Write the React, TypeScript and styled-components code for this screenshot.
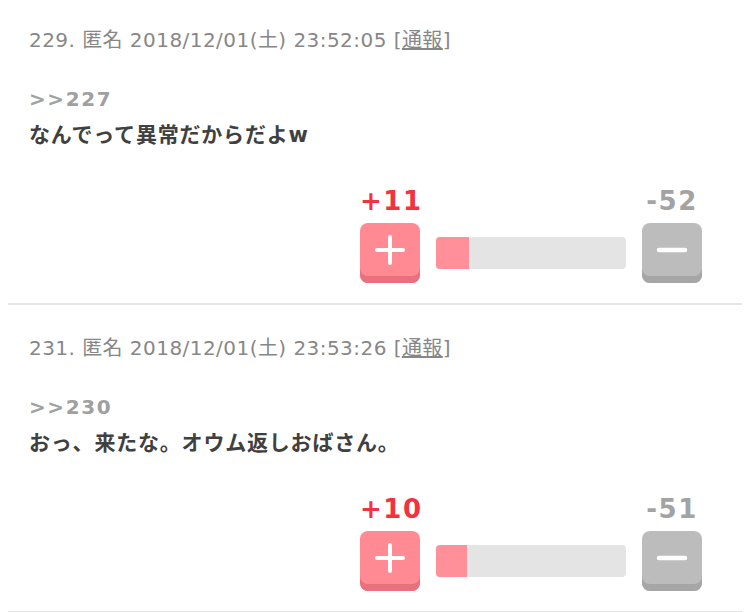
import styled, { createGlobalStyle } from 'styled-components';
import { FC } from 'react';

interface IComment {
  no: number;
  date: string;
  anchor: string;
  body: string;
  plus: number;
  minus: number;
}

const comments: IComment[] = [
  {
    no: 229,
    date: '2018/12/01(土) 23:52:05',
    anchor: '>>227',
    body: 'なんでって異常だからだよw',
    plus: 11,
    minus: 52,
  },
  {
    no: 231,
    date: '2018/12/01(土) 23:53:26',
    anchor: '>>230',
    body: 'おっ、来たな。オウム返しおばさん。',
    plus: 10,
    minus: 51,
  },
];

const GlobalStyle = createGlobalStyle`
  body {
    margin: 0 8px;
    background: #ffffff;
    font-family: "DejaVu Sans", "Noto Sans CJK JP", sans-serif;
  }
`;

const List = styled.div`
  margin-top: -3px;
`;

const Post = styled.div`
  padding: 29px 21px 20px;
  border-bottom: 2px solid #e6e6e6;
`;

const Header = styled.div`
  font-size: 20px;
  line-height: 28px;
  letter-spacing: 0.45px;
  color: #878787;
  white-space: nowrap;
`;

const Report = styled.a`
  color: #878787;
  text-decoration: underline;
`;

const Message = styled.div`
  margin-top: 27px;
  font-size: 21px;
  line-height: 36px;
  font-weight: bold;
  letter-spacing: 0.8px;
  color: #404040;
`;

const Anchor = styled.div`
  color: #a0a0a0;
  font-size: 20px;
  letter-spacing: 1.6px;
`;

const VoteRow = styled.div`
  display: flex;
  justify-content: flex-end;
  margin: 33px 19px 0 0;
`;

const VoteGrid = styled.div`
  display: grid;
  grid-template-columns: 60px 190px 60px;
  column-gap: 16px;
  row-gap: 7px;
`;

const Count = styled.div<{ $plus?: boolean }>`
  font-size: 26px;
  line-height: 30px;
  font-weight: bold;
  letter-spacing: 1.5px;
  text-align: center;
  white-space: nowrap;
  color: ${p => (p.$plus ? '#f2333f' : '#a3a3a3')};
`;

const VoteButton = styled.button<{ $plus?: boolean }>`
  width: 60px;
  height: 60px;
  padding: 0 0 7px;
  border: none;
  border-radius: 8px;
  display: flex;
  align-items: center;
  justify-content: center;
  cursor: pointer;
  background: ${p => (p.$plus ? '#ff8a94' : '#bcbcbc')};
  box-shadow: inset 0 -7px 0 ${p => (p.$plus ? '#e8717d' : '#a6a6a6')};
`;

const Bar = styled.div`
  align-self: center;
  height: 32px;
  border-radius: 4px;
  background: #e4e4e4;
  overflow: hidden;
`;

const BarFill = styled.div`
  height: 100%;
  background: #ff8f99;
`;

const PlusIcon: FC = () => (
  <svg width="30" height="30" viewBox="0 0 30 30">
    <path d="M15 2v26M2 15h26" stroke="#fff" strokeWidth="4" strokeLinecap="round" />
  </svg>
);

const MinusIcon: FC = () => (
  <svg width="32" height="30" viewBox="0 0 32 30">
    <path d="M3 15h26" stroke="#fff" strokeWidth="4.5" strokeLinecap="round" />
  </svg>
);

const CommentItem: FC<{ c: IComment }> = ({ c }) => {
  const ratio = (c.plus / (c.plus + c.minus)) * 100;
  return (
    <Post>
      <Header>
        {c.no}. 匿名 {c.date} [<Report>通報</Report>]
      </Header>
      <Message>
        <Anchor>{c.anchor}</Anchor>
        {c.body}
      </Message>
      <VoteRow>
        <VoteGrid>
          <Count $plus>+{c.plus}</Count>
          <div />
          <Count>-{c.minus}</Count>
          <VoteButton $plus aria-label="plus">
            <PlusIcon />
          </VoteButton>
          <Bar>
            <BarFill style={{ width: `${ratio}%` }} />
          </Bar>
          <VoteButton aria-label="minus">
            <MinusIcon />
          </VoteButton>
        </VoteGrid>
      </VoteRow>
    </Post>
  );
};

export default function App() {
  return (
    <>
      <GlobalStyle />
      <List>
        {comments.map(c => (
          <CommentItem key={c.no} c={c} />
        ))}
      </List>
    </>
  );
}
